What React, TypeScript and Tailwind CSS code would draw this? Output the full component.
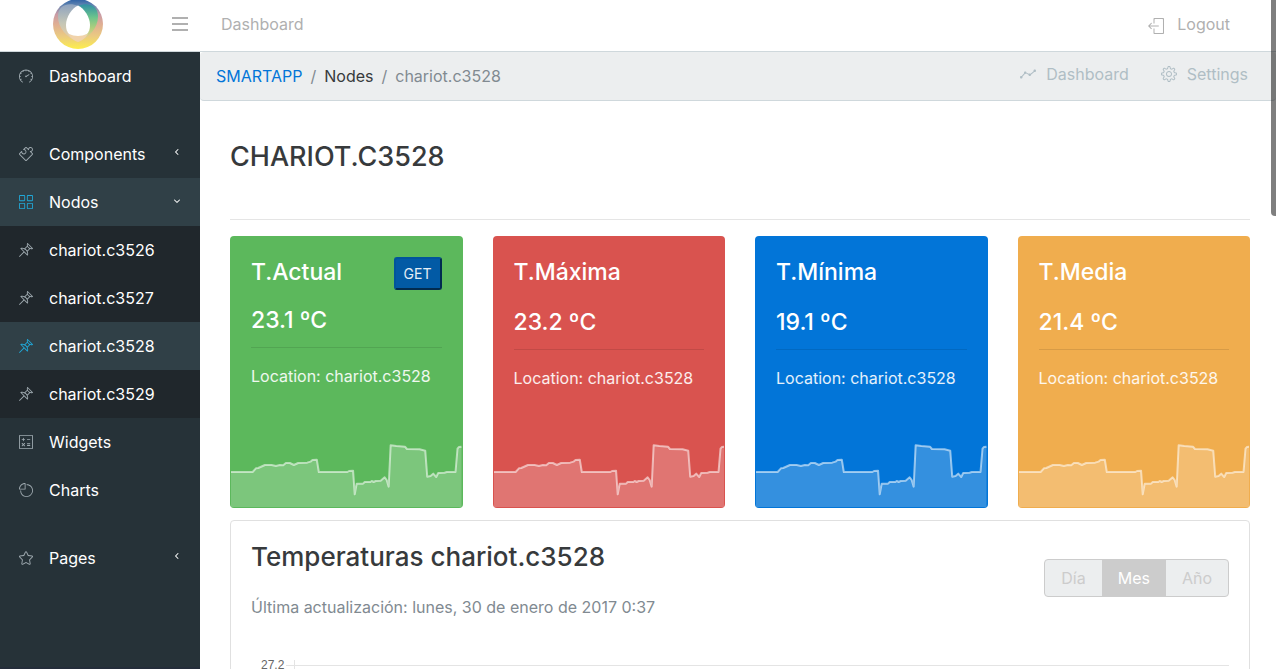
import type { ReactNode } from "react";
import {
  SlCalculator, SlGraph, SlGrid, SlLogout, SlPieChart, SlPin, SlPuzzle, SlSettings, SlSpeedometer, SlStar,
} from "react-icons/sl";
import { FaAngleDown, FaAngleLeft } from "react-icons/fa6";

const trend =
  "M33 126L98 126L108 115L115 114L135 105L155 105L168 108L180 105L190 106L198 99L210 99L222 105L235 99L262 98L272 95L278 90L291 89L297 126L383 126L388 123L400 122L405 193L411 161L430 161L435 156L452 156L456 153L462 156L468 153L483 152L495 142L501 150L507 170L513 46L530 48L556 50L562 57L600 58L617 62L623 140L633 138L641 131L650 141L656 129L675 128L682 126L708 126L714 56L718 51L726 50";

function Logo() {
  return (
    <svg viewBox="0 0 50 50" className="size-[50px]" role="img" aria-label="SmartApp">
      <defs>
        <linearGradient id="ring" x1="0" y1="0" x2="0" y2="1">
          <stop offset="0" stopColor="#2a5fa5" />
          <stop offset="0.12" stopColor="#5f83b0" />
          <stop offset="0.3" stopColor="#c89aa6" />
          <stop offset="0.5" stopColor="#dfae94" />
          <stop offset="0.75" stopColor="#ebcb80" />
          <stop offset="1" stopColor="#fdee4c" />
        </linearGradient>
        <linearGradient id="petalLeft" x1="0" y1="0" x2="0" y2="1">
          <stop offset="0" stopColor="#8ea3c0" />
          <stop offset="0.5" stopColor="#c4c6b6" />
          <stop offset="1" stopColor="#efd0a0" />
        </linearGradient>
        <linearGradient id="petalRight" x1="0" y1="0" x2="0" y2="1">
          <stop offset="0" stopColor="#2f8fa5" />
          <stop offset="0.35" stopColor="#6cc48c" />
          <stop offset="0.65" stopColor="#b4cf7c" />
          <stop offset="1" stopColor="#f2d2a4" />
        </linearGradient>
      </defs>
      <circle cx="25" cy="25" r="25" fill="url(#ring)" />
      <path d="M25 7C17 3 5 5 5 17C5 30 14 38 25 43C20 32 18 16 25 7Z" fill="url(#petalLeft)" />
      <path d="M25 7C33 3 45 5 45 17C45 30 36 38 25 43C32 32 32 16 25 7Z" fill="url(#petalRight)" />
      <path d="M15 35Q25 38 35 35Q31 41 25 43Q19 41 15 35Z" fill="#f1d3ab" />
      <path d="M25 6.5C31 9 37 18 37 26C37 30 36 33 34 35Q30 37 25 37Q20 37 16 35C14 33 13 30 13 26C13 18 19 9 25 6.5Z" fill="#fff" />
    </svg>
  );
}

type NavProps = { icon: ReactNode; label: string; tone?: "plain" | "active" | "sub"; arrow?: "left" | "down" };

function NavItem({ icon, label, tone = "plain", arrow }: NavProps) {
  const bg = tone === "active" ? "bg-[#304047]" : tone === "sub" ? "bg-[#20272c]" : "";
  return (
    <li>
      <a href="#" className={`flex h-12 items-center gap-4 px-[19px] text-white ${bg}`}>
        <span className={`text-sm ${tone === "active" ? "text-[#20a8d8]" : "text-[#9faab0]"}`}>{icon}</span>
        <span className="grow">{label}</span>
        {arrow === "left" && <FaAngleLeft className="mb-1 size-2" />}
        {arrow === "down" && <FaAngleDown className="mb-0.5 size-2" />}
      </a>
    </li>
  );
}

type CardProps = { title: string; value: string; color: string; action?: boolean };

function StatCard({ title, value, color, action }: CardProps) {
  return (
    <article className={`flex h-[272px] flex-col overflow-hidden rounded-[4px] p-px text-white ${color}`}>
      <div className="grow px-5 pt-5">
        <div className="flex items-start justify-between">
          <h2 className="text-[23px] leading-[30px] font-medium">{title}</h2>
          {action && (
            <button className="h-[33px] rounded-[3px] border-2 border-t-[#01549b] border-r-[#012b50] border-b-[#012b50] border-l-[#01549b] bg-[#025aa5] px-2 text-sm leading-5 text-white/90">
              GET
            </button>
          )}
        </div>
        <p className={`text-[23px] leading-[26px] font-medium ${action ? "mt-[17px]" : "mt-[22px]"}`}>{value}</p>
        <hr className="mt-[14px] border-black/10" />
        <p className="mt-4 text-white/90">Location: chariot.c3528</p>
      </div>
      <svg viewBox="33 0 693 231" preserveAspectRatio="none" className="h-[77px] w-full shrink-0" aria-hidden="true">
        <path d={`${trend}V231H33Z`} fill="#fff" fillOpacity="0.2" />
        <path d={trend} fill="none" stroke="#fff" strokeOpacity="0.55" strokeWidth="2" strokeLinejoin="round" vectorEffect="non-scaling-stroke" />
      </svg>
    </article>
  );
}

export default function App() {
  return (
    <div className="relative flex h-screen flex-col overflow-hidden bg-white font-['Inter',sans-serif] text-base leading-6 text-[#373a3c]">
      <header className="flex h-[52px] shrink-0 items-center border-b border-[#cfd8dc] text-[#b0b0b0]">
        <div className="flex h-full w-[156px] justify-center">
          <a href="#" className="-mt-px"><Logo /></a>
        </div>
        <button aria-label="Toggle sidebar" className="mb-1 ml-4 flex w-4 flex-col gap-1">
          <span className="h-0.5 bg-[#b0b0b0]" />
          <span className="h-0.5 bg-[#b0b0b0]" />
          <span className="h-0.5 bg-[#b0b0b0]" />
        </button>
        <a href="#" className="mb-1 ml-[33px]">Dashboard</a>
        <a href="#" className="mr-[46px] mb-1 ml-auto flex items-center gap-[13px]"><SlLogout className="mt-1" />Logout</a>
      </header>
      <div className="flex min-h-0 grow">
        <nav className="flex w-[200px] shrink-0 flex-col justify-between border-b-2 border-[#242d3a] bg-[#263238]">
          <ul>
            <NavItem icon={<SlSpeedometer />} label="Dashboard" />
            <li className="h-[30px]" />
            <NavItem icon={<SlPuzzle />} label="Components" arrow="left" />
            <NavItem icon={<SlGrid />} label="Nodos" tone="active" arrow="down" />
            <NavItem icon={<SlPin />} label="chariot.c3526" tone="sub" />
            <NavItem icon={<SlPin />} label="chariot.c3527" tone="sub" />
            <NavItem icon={<SlPin />} label="chariot.c3528" tone="active" />
            <NavItem icon={<SlPin />} label="chariot.c3529" tone="sub" />
            <NavItem icon={<SlCalculator />} label="Widgets" />
            <NavItem icon={<SlPieChart />} label="Charts" />
            <li className="h-5" />
            <NavItem icon={<SlStar />} label="Pages" arrow="left" />
          </ul>
        </nav>
        <main className="min-w-0 grow overflow-hidden">
          <div className="flex h-[49px] items-center justify-between rounded-[4px] border-b border-[#cfd8dc] bg-[#eceeef] pr-7 pl-4">
            <ol className="flex gap-2">
              <li><a href="#" className="text-[#0275d8]">SMARTAPP</a></li>
              <li className="text-[#818a91]">/</li>
              <li>Nodes</li>
              <li className="text-[#818a91]">/</li>
              <li className="text-[#818a91]">chariot.c3528</li>
            </ol>
            <div className="mb-1 flex gap-8 text-[#b0bec5]">
              <a href="#" className="flex items-center gap-2.5"><SlGraph />Dashboard</a>
              <a href="#" className="flex items-center gap-2.5"><SlSettings />Settings</a>
            </div>
          </div>
          <div className="pr-[26px] pl-[30px]">
            <h1 className="pt-10 text-[27px] leading-8 font-medium">CHARIOT.C3528</h1>
            <hr className="mt-[46px] mb-4 border-black/10" />
            <section className="grid grid-cols-4 gap-[30px]">
              <StatCard title="T.Actual" value="23.1 ºC" color="bg-[#5cb85c]" action />
              <StatCard title="T.Máxima" value="23.2 ºC" color="bg-[#d9534f]" />
              <StatCard title="T.Mínima" value="19.1 ºC" color="bg-[#0275d8]" />
              <StatCard title="T.Media" value="21.4 ºC" color="bg-[#f0ad4e]" />
            </section>
            <section className="mt-3 rounded-[4px] border border-[#e0e0e0] px-5 pt-5 pb-10">
              <div className="flex justify-between">
                <div>
                  <h2 className="text-[26px] leading-8 font-medium">Temperaturas chariot.c3528</h2>
                  <p className="mt-[22px] text-[#818a91]">Última actualización: lunes, 30 de enero de 2017 0:37</p>
                </div>
                <div className="mt-[18px] flex h-[38px] overflow-hidden rounded-[4px] border border-[#ccc] bg-[#eceeef] text-[#ccc]">
                  <button className="px-4">Día</button>
                  <button className="bg-[#ccc] px-4 text-white">Mes</button>
                  <button className="px-4">Año</button>
                </div>
              </div>
              <div className="mt-[38px] flex h-40 items-start gap-0.5 pl-2.5">
                <span className="font-['Liberation_Sans',sans-serif] text-xs leading-4 text-[#666]">27.2</span>
                <div className="mt-2 h-full grow border-t border-[#e4e4e4] pl-2">
                  <div className="-mt-1.5 h-full border-l border-[#e4e4e4]" />
                </div>
              </div>
            </section>
          </div>
        </main>
      </div>
      <div className="absolute top-0 right-0 h-[216px] w-[5px] rounded-bl-sm bg-black/50" />
    </div>
  );
}
